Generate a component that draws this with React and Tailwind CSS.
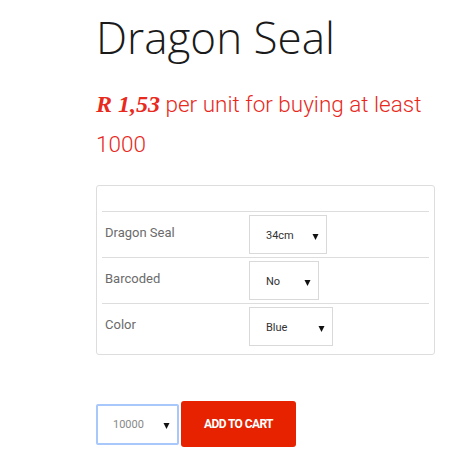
import { useState } from "react";

function Caret() {
  return (
    <svg width="7" height="7" viewBox="0 0 7 7" className="shrink-0">
      <path d="M0.5 1h6L3.5 7z" fill="#111" />
    </svg>
  );
}

function FakeSelect({ value, width }) {
  return (
    <div
      className={`flex h-[39px] items-center justify-between border border-[#d9d9d9] bg-white pl-[16px] pr-[7px] pt-[3px] text-[11px] text-[#333] ${width}`}
    >
      <span>{value}</span>
      <Caret />
    </div>
  );
}

const options = [
  { label: "Dragon Seal", value: "34cm", width: "w-[78px]" },
  { label: "Barcoded", value: "No", width: "w-[70px]" },
  { label: "Color", value: "Blue", width: "w-[84px]" },
];

function App() {
  const [qty] = useState("10000");

  return (
    <div className="min-h-screen bg-white font-['Roboto',sans-serif]">
      <div className="ml-[96px] w-[339px] pt-[12px]">
        <h1 className="font-['Open_Sans',sans-serif] text-[44px] font-light leading-[50px] text-[#1a1a1a]">
          Dragon Seal
        </h1>

        <p className="mt-[22px] text-[22.5px] font-light leading-[40px] text-[#e8291c]">
          <span className="font-['Liberation_Serif',serif] text-[24px] font-bold italic">
            R 1,53
          </span>{" "}
          per unit for buying at least 1000
        </p>

        <div className="mt-[21px] rounded-[3px] border border-[#dddddd] p-[5px]">
          <div className="h-[20px]" />
          {options.map((o) => (
            <div
              key={o.label}
              className="flex items-center border-t border-[#dddddd] py-[3px]"
            >
              <div className="w-[147px] pb-[3px] pl-[3px] text-[13px] text-[#6b6b6b]">
                {o.label}
              </div>
              <FakeSelect value={o.value} width={o.width} />
            </div>
          ))}
        </div>

        <div className="mt-[46px] flex items-center gap-[2px]">
          <div className="flex h-[41px] w-[83px] items-center justify-between rounded-[2px] border-2 border-[#a8c7fa] pl-[15px] pr-[7px] pt-[2px] text-[11px] text-[#888]">
            <span>{qty}</span>
            <Caret />
          </div>
          <button className="h-[46px] w-[115px] rounded-[3px] bg-[#e62200] text-[12px] font-bold tracking-[-0.6px] text-white">
            ADD TO CART
          </button>
        </div>
      </div>
    </div>
  );
}

export default App;
